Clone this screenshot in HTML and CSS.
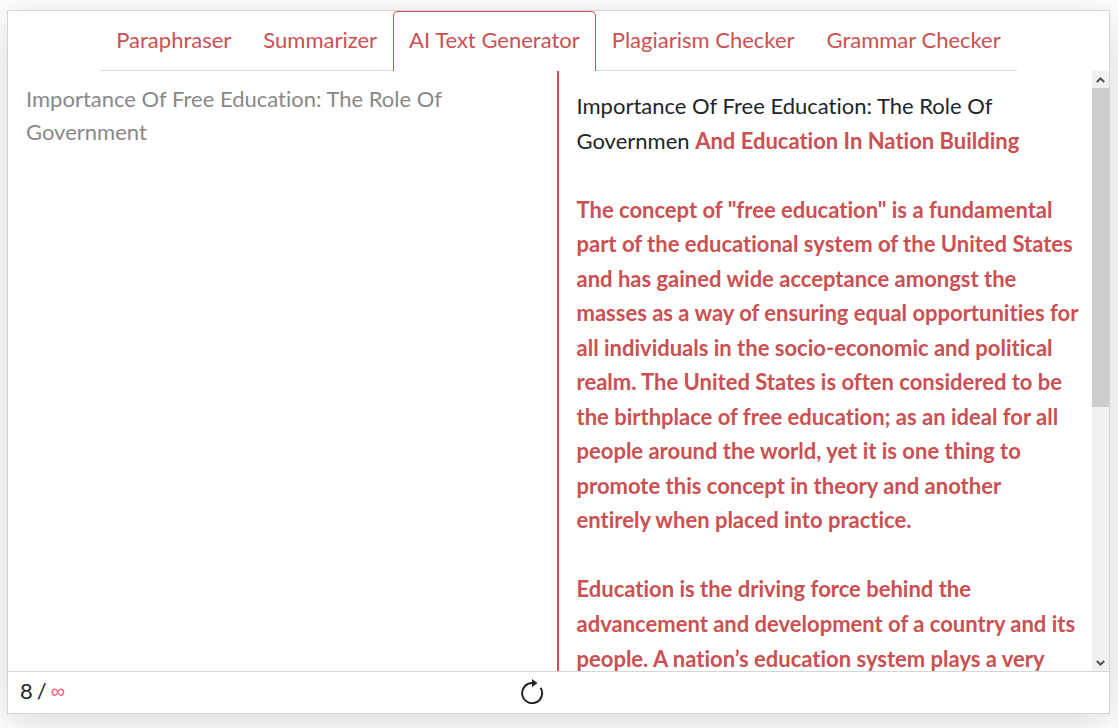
FILE: index.html
```
<!DOCTYPE html>
<html lang="en">
<head>
<meta charset="utf-8">
<meta name="viewport" content="width=device-width, initial-scale=1">
<title>AI Text Generator</title>
<link rel="stylesheet" href="styles.css">
</head>
<body>
<main class="card">
  <nav class="tabs">
    <a class="tab" href="#paraphraser">Paraphraser</a>
    <a class="tab" href="#summarizer">Summarizer</a>
    <a class="tab tab-active" href="#generator" aria-current="page">AI Text Generator</a>
    <a class="tab" href="#plagiarism">Plagiarism Checker</a>
    <a class="tab" href="#grammar">Grammar Checker</a>
  </nav>
  <div class="panes">
    <textarea class="source" aria-label="Your text">Importance Of Free Education: The Role Of Government</textarea>
    <section class="result" aria-label="Generated text">
      <div class="result-text">
        <p>Importance Of Free Education: The Role Of Governmen <strong>And Education In Nation Building</strong></p>
        <p><strong>The concept of "free education" is a fundamental part of the educational system of the United States and has gained wide acceptance amongst the masses as a way of ensuring equal opportunities for all individuals in the socio-economic and political realm. The United States is often considered to be the birthplace of free education; as an ideal for all people around the world, yet it is one thing to promote this concept in theory and another<br>entirely when placed into practice.</strong></p>
        <p><strong>Education is the driving force behind the advancement and development of a country and its people. A nation’s education system plays a very</strong></p>
      </div>
      <div class="scrollbar">
        <button class="scroll-button" type="button" aria-label="Scroll up">
          <svg width="9" height="6" viewBox="0 0 9 6"><path d="M.8 5 4.5 1.5 8.2 5" fill="none" stroke="#505050" stroke-width="2"/></svg>
        </button>
        <div class="scroll-track"><div class="scroll-thumb"></div></div>
        <button class="scroll-button" type="button" aria-label="Scroll down">
          <svg width="9" height="6" viewBox="0 0 9 6"><path d="M.8 1 4.5 4.5 8.2 1" fill="none" stroke="#505050" stroke-width="2"/></svg>
        </button>
      </div>
    </section>
  </div>
  <footer class="footer">
    <div class="count"><span>8</span><span>/</span><span class="limit">∞</span></div>
    <button class="refresh" type="button" aria-label="Generate again">
      <svg width="24" height="26" viewBox="0 0 24 26"><path d="M12.5 5.1A10 10 0 1 0 20.6 9.8" fill="none" stroke="#212529" stroke-width="2"/><path d="M12 1 17.4 5.1 12 9.2Z" fill="#212529"/></svg>
    </button>
    <span></span>
  </footer>
</main>
</body>
</html>
```
FILE: styles.css
```
* {
  box-sizing: border-box;
}

body {
  margin: 0;
  padding: 10px 8px 14px 7px;
  height: 100vh;
  overflow: hidden;
  background: #fff;
  color: #212529;
  font: 22px/1.5 Lato, sans-serif;
  font-variant-ligatures: none;
}

.card {
  display: flex;
  flex-direction: column;
  height: 100%;
  border: 1px solid #d6d6d6;
  background: #fff;
  box-shadow: 0 8px 40px rgba(0, 0, 0, 0.16);
}

.tabs {
  display: flex;
  align-self: center;
  border-bottom: 1px solid #dbdbdb;
}

.tab {
  margin-bottom: -1px;
  padding: 11px 15px 15px;
  border: 1px solid transparent;
  border-bottom: 0;
  border-radius: 5px 5px 0 0;
  color: #cb5051;
  text-decoration: none;
}

.tab-active {
  border-color: #cb5051;
  background: #fff;
}

.panes {
  display: flex;
  flex: 1;
  min-height: 0;
}

.source {
  flex: 1;
  min-width: 0;
  padding: 11px 18px;
  border: 0;
  outline: 0;
  resize: none;
  background: none;
  color: #888;
  font: inherit;
  font-variant-ligatures: none;
}

.result {
  display: flex;
  flex: none;
  width: calc(50% + 2px);
  border-left: 2px solid #cb5051;
}

.result-text {
  flex: 1;
  min-width: 0;
  padding: 18px 12px 0 18px;
  overflow: hidden;
  line-height: 1.57;
}

.result-text p {
  margin: 0 0 1.57em;
}

.result-text strong {
  color: #cb5051;
  font-weight: 700;
}

.scrollbar {
  display: flex;
  flex: none;
  flex-direction: column;
  width: 17px;
  background: #f0f0f0;
}

.scroll-button {
  display: flex;
  align-items: center;
  justify-content: center;
  height: 17px;
  padding: 0;
  border: 0;
  background: none;
}

.scroll-track {
  flex: 1;
}

.scroll-thumb {
  height: 56.4%;
  background: #cdcdcd;
}

.footer {
  display: grid;
  grid-template-columns: 1fr auto 1fr;
  align-items: center;
  height: 42px;
  padding: 0 66px 4px 12px;
  border-top: 1px solid #d6d6d6;
}

.count {
  display: flex;
  align-items: center;
  gap: 4px;
}

.limit {
  color: #ff5a7d;
  font-family: "Liberation Sans", sans-serif;
  font-size: 20px;
}

.refresh {
  display: flex;
  padding: 0;
  border: 0;
  background: none;
}
```
